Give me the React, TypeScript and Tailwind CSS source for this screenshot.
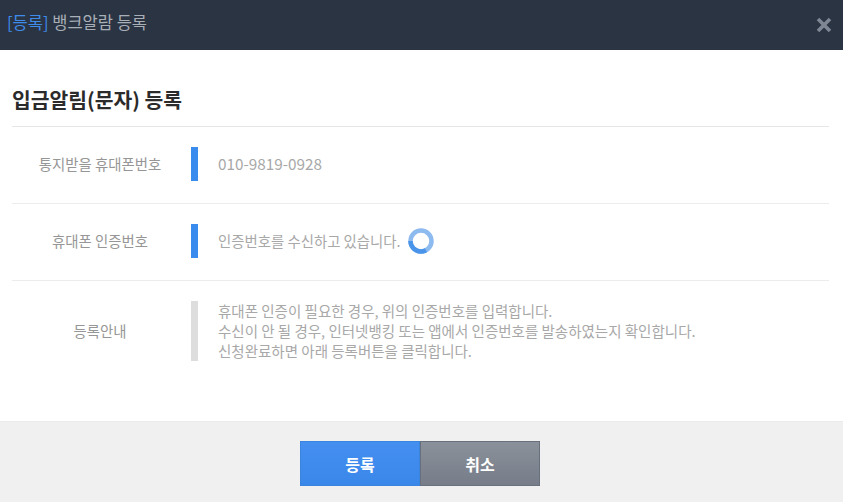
const rowLabel = 'mr-[3px] w-[176px] shrink-0 text-center text-[14.4px] text-[#969696]'

export default function App() {
  return (
    <div className="flex h-[502px] w-[843px] flex-col overflow-hidden bg-white font-['Noto_Sans_CJK_KR','Noto_Sans',sans-serif]">
      {/* Header */}
      <div className="flex h-[50px] shrink-0 items-center justify-between bg-[#2a3443] pl-[7px] pr-[11px]">
        <h1 className="pb-[5px] text-[16.5px] text-[#a9afb7]">
          <span className="text-[#3f8bea]">[등록]</span> 뱅크알람 등록
        </h1>
        <svg width="16" height="16" viewBox="0 0 16 16" aria-hidden="true">
          <path d="M2 2L14 14M14 2L2 14" stroke="#7f8794" strokeWidth="3.6" />
        </svg>
      </div>

      {/* Body */}
      <div className="flex-1 pl-3 pr-[14px]">
        <h2 className="flex h-[77px] items-end border-b border-[#e6e6e6] pb-[11px] text-[20.4px] font-bold text-[#2b2b2b]">
          입금알림(문자) 등록
        </h2>

        <div className="flex h-[77px] items-center border-b border-[#ececec] pb-[2px]">
          <div className={rowLabel}>통지받을 휴대폰번호</div>
          <div className="h-[34px] w-[7px] shrink-0 bg-[#3a8bee]" />
          <div className="pb-[2px] pl-5 text-[15.3px] text-[#a8a8a8]">010-9819-0928</div>
        </div>

        <div className="flex h-[77px] items-center border-b border-[#ececec] pb-[2px]">
          <div className={rowLabel}>휴대폰 인증번호</div>
          <div className="h-[34px] w-[7px] shrink-0 bg-[#3a8bee]" />
          <div className="flex items-center pl-5 text-[14.4px] text-[#a8a8a8]">
            인증번호를 수신하고 있습니다.
            <svg className="ml-[7px]" width="26" height="26" viewBox="0 0 26 26" aria-hidden="true">
              <circle cx="13" cy="13" r="10.5" fill="none" stroke="#8dbbf0" strokeWidth="4.5" />
              <path d="M2.5 13A10.5 10.5 0 0 0 18 22.2" fill="none" stroke="#4a94ea" strokeWidth="4.5" />
            </svg>
          </div>
        </div>

        <div className="flex h-[100px] items-center">
          <div className={rowLabel}>등록안내</div>
          <div className="h-[60px] w-[7px] shrink-0 bg-[#dddddd]" />
          <div className="pl-5 text-[14.5px] leading-[20px] text-[#a8a8a8]">
            <p>휴대폰 인증이 필요한 경우, 위의 인증번호를 입력합니다.</p>
            <p>수신이 안 될 경우, 인터넷뱅킹 또는 앱에서 인증번호를 발송하였는지 확인합니다.</p>
            <p>신청완료하면 아래 등록버튼을 클릭합니다.</p>
          </div>
        </div>
      </div>

      {/* Footer */}
      <div className="flex h-[81px] shrink-0 items-start justify-center border-t border-[#ebebeb] bg-[#f0f0f0] pr-[3px] pt-[19px]">
        <button type="button" className="h-[45px] w-[120px] border border-[#3a84de] bg-gradient-to-b from-[#448ff0] to-[#3a87ea] text-[16px] font-bold text-white">
          등록
        </button>
        <button type="button" className="h-[45px] w-[120px] border border-[#68707e] bg-gradient-to-b from-[#8a919a] to-[#767d89] text-[16px] font-bold text-white">
          취소
        </button>
      </div>
    </div>
  )
}
